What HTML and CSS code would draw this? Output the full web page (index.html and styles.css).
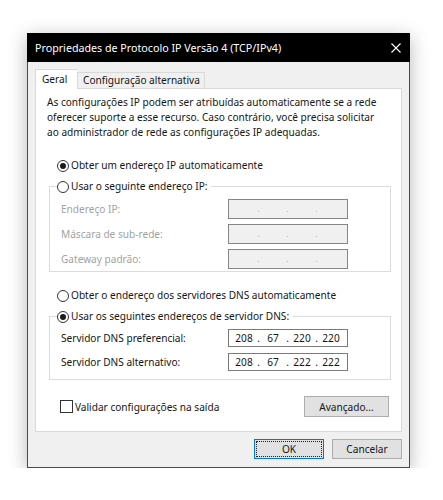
FILE: index.html
```html
<!DOCTYPE html>
<html lang="pt-BR">
<head>
<meta charset="utf-8">
<title>Propriedades de Protocolo IP Versão 4 (TCP/IPv4)</title>
<link rel="stylesheet" href="styles.css">
</head>
<body>
<div class="window">
  <div class="titlebar">
    <span class="title">Propriedades de Protocolo IP Versão 4 (TCP/IPv4)</span>
    <svg class="close" width="10" height="10" viewBox="0 0 10 10"><path d="M0.5 0.5L9.5 9.5M9.5 0.5L0.5 9.5" stroke="#fff" stroke-width="1.1" fill="none"/></svg>
  </div>
  <div class="client">
    <div class="tabs">
      <div class="tab active">Geral</div>
      <div class="tab alt">Configuração alternativa</div>
    </div>
    <div class="panel">
      <p class="intro">As configurações IP podem ser atribuídas automaticamente se a rede<br>oferecer suporte a esse recurso. Caso contrário, você precisa solicitar<br>ao administrador de rede as configurações IP adequadas.</p>

      <div class="radio-row first"><span class="radio checked"></span><span>Obter um endereço IP automaticamente</span></div>

      <fieldset class="group">
        <legend><span class="radio-row"><span class="radio"></span><span>Usar o seguinte endereço IP:</span></span></legend>
        <div class="fields ip">
          <span class="label disabled">Endereço IP:</span>
          <span class="ipbox disabled"><span class="oct"></span><span class="dot">.</span><span class="oct"></span><span class="dot">.</span><span class="oct"></span><span class="dot">.</span><span class="oct"></span></span>
          <span class="label disabled">Máscara de sub-rede:</span>
          <span class="ipbox disabled"><span class="oct"></span><span class="dot">.</span><span class="oct"></span><span class="dot">.</span><span class="oct"></span><span class="dot">.</span><span class="oct"></span></span>
          <span class="label disabled">Gateway padrão:</span>
          <span class="ipbox disabled"><span class="oct"></span><span class="dot">.</span><span class="oct"></span><span class="dot">.</span><span class="oct"></span><span class="dot">.</span><span class="oct"></span></span>
        </div>
      </fieldset>

      <div class="radio-row second"><span class="radio"></span><span>Obter o endereço dos servidores DNS automaticamente</span></div>

      <fieldset class="group">
        <legend><span class="radio-row"><span class="radio checked"></span><span>Usar os seguintes endereços de servidor DNS:</span></span></legend>
        <div class="fields dns">
          <span class="label">Servidor DNS preferencial:</span>
          <span class="ipbox"><span class="oct">208</span><span class="dot">.</span><span class="oct">67</span><span class="dot">.</span><span class="oct">220</span><span class="dot">.</span><span class="oct">220</span></span>
          <span class="label">Servidor DNS alternativo:</span>
          <span class="ipbox"><span class="oct">208</span><span class="dot">.</span><span class="oct">67</span><span class="dot">.</span><span class="oct">222</span><span class="dot">.</span><span class="oct">222</span></span>
        </div>
      </fieldset>

      <div class="bottom-row">
        <label class="check-row"><span class="checkbox"></span><span>Validar configurações na saída</span></label>
        <button class="btn adv">Avançado...</button>
      </div>
    </div>
    <div class="buttons">
      <button class="btn ok"><span class="focus">OK</span></button>
      <button class="btn">Cancelar</button>
    </div>
  </div>
</div>
</body>
</html>
```
FILE: styles.css
```css
* { box-sizing: border-box; }
html, body { margin: 0; padding: 0; background: #fff; }
body {
  font-family: "Noto Sans", "DejaVu Sans", sans-serif;
  font-size: 10.1px;
  color: #151515;
  padding: 33px 0 0 27px;
}
.window {
  width: 383px;
  height: 435px;
  border: 1px solid #4a4a4a;
  border-top: none;
  background: #f0f0f0;
  box-shadow: 0 4px 18px rgba(0,0,0,0.28);
  display: flex;
  flex-direction: column;
}
.titlebar {
  height: 29px;
  background: #000;
  color: #fff;
  display: flex;
  align-items: center;
  padding: 0 9px 0 8px;
  margin: 0 -1px;
}
.title { flex: 1; font-size: 10.7px; white-space: nowrap; }
.close { display: block; }
.client {
  flex: 1;
  display: flex;
  flex-direction: column;
  padding: 7px 7px 0 7px;
}
.tabs {
  display: flex;
  align-items: flex-end;
  height: 19px;
  position: relative;
  z-index: 1;
}
.tab {
  height: 16px;
  line-height: 15px;
  padding: 0 4px 0 5px;
  border: 1px solid #d9d9d9;
  border-bottom: none;
  background: #f0f0f0;
  white-space: nowrap;
}
.tab.active {
  width: 42px;
  height: 20px;
  line-height: 19px;
  background: #fff;
  margin-bottom: -1px;
  padding: 0 0 0 6px;
  border-right: none;
}
.panel {
  height: 344px;
  border: 1px solid #d9d9d9;
  background: #fff;
  padding: 6px 11px 0 11px;
  display: flex;
  flex-direction: column;
}
.intro {
  margin: 0;
  line-height: 15px;
  white-space: nowrap;
}
.radio-row {
  display: flex;
  align-items: center;
  height: 15px;
  line-height: 15px;
  white-space: nowrap;
}
.radio-row.first { margin: 18px 0 0 10px; }
.radio-row.second { margin: 16px 0 0 10px; }
.radio {
  width: 12px;
  height: 12px;
  border: 1px solid #333;
  border-radius: 50%;
  background: #fff;
  margin-right: 2px;
  display: flex;
  align-items: center;
  justify-content: center;
  flex: none;
}
.radio.checked::after {
  content: "";
  width: 6px;
  height: 6px;
  border-radius: 50%;
  background: #1a1a1a;
}
.group {
  margin: 6px 0 0 2px;
  width: 342px;
  border: 1px solid #dcdcdc;
  padding: 0 0 2px 11px;
}
.group legend {
  padding: 0 4px 0 0;
  margin-left: -4px;
  line-height: 15px;
}
.fields {
  display: grid;
  grid-template-columns: 1fr 120px;
  align-items: center;
  padding-right: 42px;
}
.fields.ip { padding-top: 5px; row-gap: 5px; }
.fields.dns { padding-top: 5px; row-gap: 6px; padding-bottom: 6px; }
.label { white-space: nowrap; }
.label.disabled { color: #a2a2a2; }
.ipbox {
  height: 20px;
  border: 1px solid #7a7a7a;
  background: #fff;
  display: flex;
  align-items: center;
  padding-left: 3px;
  line-height: 16px;
}
.fields.dns .ipbox { height: 18px; }
.ipbox.disabled {
  background: #f0f0f0;
  border-color: #858585;
  color: #b0b0b0;
  font-size: 9px;
}
.oct { width: 24px; text-align: center; }
.dot { width: 5px; text-align: center; }
.bottom-row {
  margin-top: 16px;
  display: flex;
  align-items: center;
  justify-content: space-between;
  padding: 0 1px 0 13px;
}
.check-row {
  display: flex;
  align-items: center;
  white-space: nowrap;
}
.checkbox {
  width: 13px;
  height: 13px;
  border: 1px solid #333;
  background: #fff;
  margin-right: 2px;
}
.btn {
  font-family: inherit;
  font-size: 10.1px;
  color: #151515;
  background: #e1e1e1;
  border: 1px solid #adadad;
  padding: 0;
  margin: 0;
}
.adv { width: 85px; height: 21px; }
.buttons {
  display: flex;
  justify-content: flex-end;
  gap: 8px;
  padding-top: 7px;
}
.buttons .btn { width: 70px; height: 20px; }
.btn.ok {
  border: 1px solid #0078d7;
  padding: 1px;
  display: flex;
}
.focus {
  flex: 1;
  border: 1px dotted #222;
  display: flex;
  align-items: center;
  justify-content: center;
}
```
